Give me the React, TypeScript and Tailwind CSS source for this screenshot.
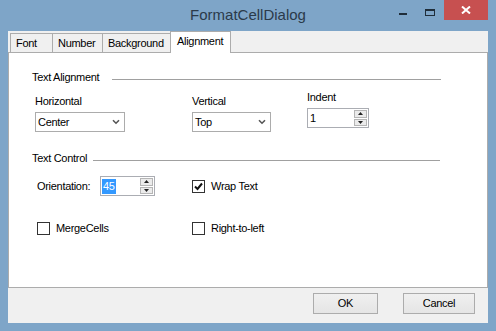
import React from 'react'

const Chevron = () => (
  <svg width="8" height="6" viewBox="0 0 8 6" className="shrink-0">
    <path d="M1 1.2 L4 4.2 L7 1.2" fill="none" stroke="#555" strokeWidth="1.6" />
  </svg>
)

const Combo = ({ value, width }: { value: string; width: string }) => (
  <div className={`${width} h-[20px] border border-[#acacac] bg-white flex items-center justify-between pl-[2px] pr-[4px]`}>
    <span>{value}</span>
    <Chevron />
  </div>
)

const SpinButtons = () => (
  <div className="flex flex-col h-full py-[1px] pr-[1px] gap-px">
    <div className="flex-1 w-[13px] border border-[#b5b5b5] bg-[#ebebeb] flex items-center justify-center">
      <svg width="5" height="3" viewBox="0 0 5 3"><path d="M0 3 L2.5 0 L5 3Z" fill="#222" /></svg>
    </div>
    <div className="flex-1 w-[13px] border border-[#b5b5b5] bg-[#ebebeb] flex items-center justify-center">
      <svg width="5" height="3" viewBox="0 0 5 3"><path d="M0 0 L2.5 3 L5 0Z" fill="#222" /></svg>
    </div>
  </div>
)

const Check = ({ checked, label }: { checked?: boolean; label: string }) => (
  <div className="flex items-center gap-[6px]">
    <div className="w-[13px] h-[13px] border border-[#333] bg-white flex items-center justify-center">
      {checked && (
        <svg width="9" height="9" viewBox="0 0 9 9">
          <path d="M1 4.5 L3.5 7 L8 1.5" fill="none" stroke="#111" strokeWidth="2" />
        </svg>
      )}
    </div>
    <span>{label}</span>
  </div>
)

const GroupHeader = ({ title, labelWidth, width }: { title: string; labelWidth: string; width: string }) => (
  <div className={`flex items-center h-[13px] ${width}`}>
    <span className={`${labelWidth} shrink-0 leading-[13px] whitespace-nowrap`}>{title}</span>
    <div className="flex-1 h-px bg-[#a0a0a0] mt-[3px]" />
  </div>
)

export default function App() {
  const tabs = [
    { name: 'Font', w: 'w-[42px]' },
    { name: 'Number', w: 'w-[50px]' },
    { name: 'Background', w: 'w-[68px]' },
  ]

  return (
    <div className="w-[496px] h-[331px] bg-[#7ea5c8] flex flex-col px-[8px] pb-[8px] font-['Liberation_Sans',Arial,sans-serif] text-[11px] tracking-[-0.3px] text-black">
      {/* title bar */}
      <div className="relative h-[31px] flex items-center justify-center">
        <span className="text-[15px] tracking-normal text-[#2b3a4a]">FormatCellDialog</span>
        <div className="absolute right-0 top-0 flex items-start">
          <div className="w-[8px] h-[2px] bg-[#1f2d3a] mt-[13px]" />
          <div className="w-[10px] h-[7px] border border-t-2 border-[#1f2d3a] mt-[9px] ml-[18px]" />
          <div className="w-[44px] h-[20px] bg-[#c75050] ml-[9px] flex items-center justify-center">
            <svg width="10" height="8" viewBox="0 0 10 8">
              <path d="M1 0.5 L9 7.5 M9 0.5 L1 7.5" stroke="#fff" strokeWidth="2" />
            </svg>
          </div>
        </div>
      </div>

      {/* client */}
      <div className="flex-1 bg-[#f0f0f0] flex flex-col">
        <div className="h-[21px] flex items-end pl-[2px]">
          {tabs.map((t) => (
            <div
              key={t.name}
              className={`${t.w} h-[19px] border-t border-l border-[#acacac] bg-[#f0f0f0] pl-[5px] leading-[18px]`}
            >
              {t.name}
            </div>
          ))}
          <div className="relative z-10 w-[61px] h-[22px] -mb-px border-t border-l border-r border-[#acacac] bg-white pl-[6px] leading-[19px]">
            Alignment
          </div>
        </div>

        <div className="h-[236px] border border-[#acacac] bg-white pl-[23px] pt-[18px]">
          <GroupHeader title="Text Alignment" labelWidth="w-[80px]" width="w-[409px]" />

          <div className="flex items-start mt-[7px] pl-[3px]">
            <div className="w-[157px] mt-[4px]">
              <div className="h-[13px] leading-[13px]">Horizontal</div>
              <div className="mt-[4px]">
                <Combo value="Center" width="w-[90px]" />
              </div>
            </div>
            <div className="w-[115px] mt-[4px]">
              <div className="h-[13px] leading-[13px]">Vertical</div>
              <div className="mt-[4px]">
                <Combo value="Top" width="w-[79px]" />
              </div>
            </div>
            <div>
              <div className="h-[13px] leading-[13px]">Indent</div>
              <div className="mt-[4px] w-[62px] h-[20px] border border-[#abadb3] bg-white flex items-center justify-between pl-[2px]">
                <span>1</span>
                <SpinButtons />
              </div>
            </div>
          </div>

          <div className="mt-[20px]">
            <GroupHeader title="Text Control" labelWidth="w-[61px]" width="w-[408px]" />
          </div>

          <div className="mt-[11px] h-[20px] flex items-center pl-[5px]">
            <span className="w-[63px]">Orientation:</span>
            <div className="w-[55px] h-[20px] border border-[#abadb3] bg-white flex items-center justify-between pl-px">
              <span className="bg-[#3399ff] text-white h-[15px] leading-[15px] px-px">45</span>
              <SpinButtons />
            </div>
            <div className="ml-[37px]">
              <Check checked label="Wrap Text" />
            </div>
          </div>

          <div className="mt-[26px] h-[13px] flex items-center pl-[5px]">
            <div className="w-[155px]">
              <Check label="MergeCells" />
            </div>
            <Check label="Right-to-left" />
          </div>
        </div>

        <div className="flex-1 flex justify-end items-start gap-[25px] pt-[5px] pr-[13px]">
          <div className="w-[65px] h-[21px] border border-[#acacac] bg-gradient-to-b from-[#f0f0f0] to-[#e5e5e5] flex items-center justify-center">
            OK
          </div>
          <div className="w-[72px] h-[21px] border border-[#acacac] bg-gradient-to-b from-[#f0f0f0] to-[#e5e5e5] flex items-center justify-center">
            Cancel
          </div>
        </div>
      </div>
    </div>
  )
}
